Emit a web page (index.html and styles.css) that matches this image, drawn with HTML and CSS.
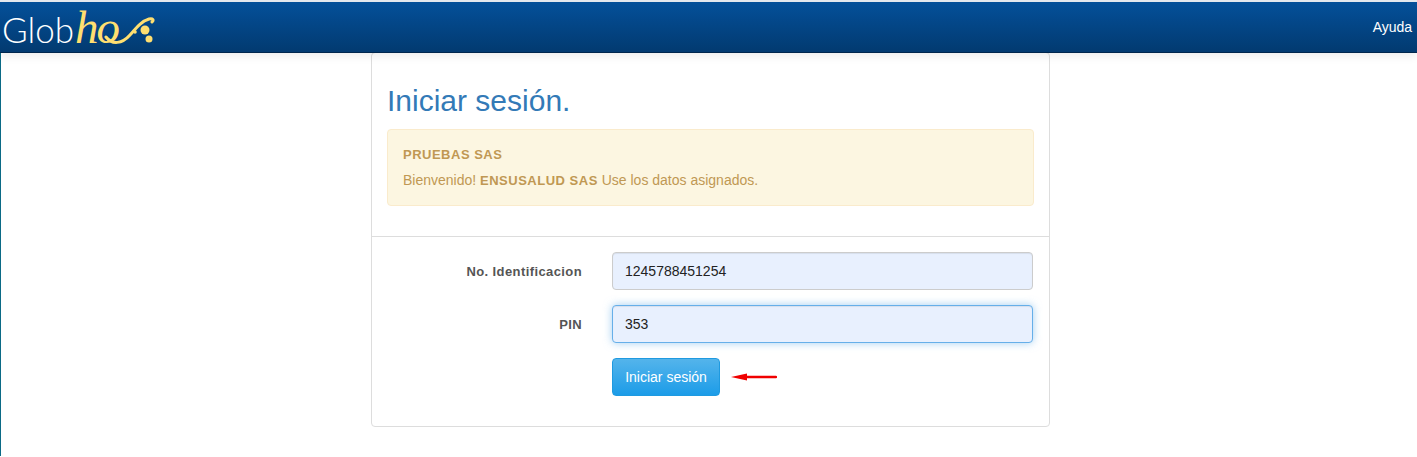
FILE: index.html
```html
<!DOCTYPE html>
<html lang="es">
<head>
    <meta charset="UTF-8">
    <title>Iniciar sesión</title>
    <link rel="stylesheet" href="styles.css">
</head>
<body>
    <div class="navbar">
        <a class="brand">
            <span class="brand-glob">Glob</span><span class="brand-ho">ho</span>
            <svg class="brand-swoosh" width="60" height="40" viewBox="0 0 60 40">
                <path d="M2 28 C8 36 18 35 26 26 C33 18 38 12 45 10 C49 9 50 11 48 13" fill="none" stroke="#ffdf70" stroke-width="3" stroke-linecap="round"/>
                <circle cx="41" cy="21" r="4.5" fill="#ffdf70"/>
                <circle cx="45" cy="30" r="3.5" fill="#ffdf70"/>
                <circle cx="31" cy="23" r="1.8" fill="#ffdf70"/>
            </svg>
        </a>
        <a class="nav-link">Ayuda <span class="caret"></span></a>
    </div>

    <div class="page">
        <div class="card">
            <div class="card-top">
                <h2 class="title">Iniciar sesión.</h2>
                <div class="alert">
                    <div class="alert-title">PRUEBAS SAS</div>
                    <div class="alert-text">Bienvenido! <b>ENSUSALUD SAS</b> Use los datos asignados.</div>
                </div>
            </div>
            <form class="form">
                <label class="form-label">No. Identificacion</label>
                <input class="form-input" type="text" value="1245788451254">
                <label class="form-label">PIN</label>
                <input class="form-input is-focus" type="text" value="353">
                <div class="form-actions">
                    <button class="btn" type="button">Iniciar sesión</button>
                    <svg width="46" height="10" viewBox="0 0 46 10">
                        <path d="M16 5 H45" stroke="#f00000" stroke-width="2.4" stroke-linecap="round"/>
                        <path d="M0 5 L16 1.5 V8.5 Z" fill="#f00000"/>
                    </svg>
                </div>
            </form>
        </div>
    </div>
</body>
</html>
```

FILE: styles.css
```css
* {
    box-sizing: border-box;
}
body {
    margin: 0;
    height: 457px;
    overflow: hidden;
    font-family: "Liberation Sans", Arial, sans-serif;
    font-size: 13px;
    color: #555;
    background: white;
}
.navbar {
    display: flex;
    justify-content: space-between;
    align-items: center;
    height: 53px;
    margin-top: 0;
    border-top: 2px solid #e4e8ee;
    border-bottom: 1px solid #00264d;
    background: linear-gradient(#04509a, #023a70);
    box-shadow: 0 3px 9px rgba(0, 0, 0, 0.08);
    position: relative;
    z-index: 1;
}
.brand {
    display: flex;
    align-items: baseline;
    position: relative;
    padding-left: 2px;
    height: 50px;
    line-height: 50px;
}
.brand-glob {
    font-family: "Lato", sans-serif;
    font-weight: 300;
    font-size: 35px;
    color: white;
}
.brand-ho {
    font-family: "Liberation Serif", serif;
    font-style: italic;
    font-size: 47px;
    color: #ffdf70;
    margin-left: 1px;
    letter-spacing: -2px;
}
.brand-swoosh {
    position: absolute;
    left: 104px;
    top: 7px;
}
.nav-link {
    color: white;
    font-size: 14px;
    white-space: nowrap;
    margin-right: -9px;
    padding-bottom: 1px;
}
.caret {
    display: inline-block;
    margin-left: 2px;
    vertical-align: middle;
    border-top: 4px solid white;
    border-left: 4px solid transparent;
    border-right: 4px solid transparent;
}
.page {
    height: 404px;
    border-left: 1px solid #0b6a86;
    padding-left: 370px;
}
.card {
    width: 679px;
    height: 375px;
    margin-top: -1px;
    background: white;
    border: 1px solid #ddd;
    border-radius: 4px;
}
.card-top {
    padding: 0 15px 30px;
    border-bottom: 1px solid #ddd;
}
.title {
    margin: 0;
    padding-top: 30px;
    height: 76px;
    font-size: 30px;
    line-height: 36px;
    font-weight: 400;
    color: #337ab7;
}
.alert {
    height: 77px;
    padding: 15px;
    background: #fcf6e1;
    border: 1px solid #faebcc;
    border-radius: 4px;
    color: #c09853;
    font-size: 14px;
}
.alert-title {
    font-weight: bold;
    font-size: 13px;
    letter-spacing: 0.5px;
    line-height: 20px;
    margin-bottom: 5px;
}
.alert-text {
    font-size: 14px;
    line-height: 20px;
}
.alert-text b {
    font-size: 13px;
    letter-spacing: 0.5px;
}
.form {
    display: grid;
    grid-template-columns: 210px 421px;
    column-gap: 30px;
    row-gap: 15px;
    align-items: center;
    padding-top: 15px;
}
.form-label {
    text-align: right;
    font-weight: bold;
    font-size: 13px;
    letter-spacing: 0.4px;
}
.form-input {
    height: 38px;
    padding: 0 12px;
    font-family: inherit;
    font-size: 14px;
    color: #222;
    background: #e8f0fe;
    border: 1px solid #ccc;
    border-radius: 4px;
    outline: none;
    box-shadow: inset 0 1px 1px rgba(0, 0, 0, 0.075);
}
.is-focus {
    border-color: #66afe9;
    box-shadow: inset 0 1px 1px rgba(0, 0, 0, 0.075), 0 0 8px rgba(102, 175, 233, 0.6);
}
.form-actions {
    grid-column: 2;
    display: flex;
    align-items: center;
    gap: 11px;
}
.btn {
    width: 108px;
    height: 38px;
    padding: 0;
    font-family: inherit;
    font-size: 14px;
    color: white;
    background: linear-gradient(#54b4eb, #1c9ce8);
    border: 1px solid #1f9ae0;
    border-radius: 4px;
}
```
